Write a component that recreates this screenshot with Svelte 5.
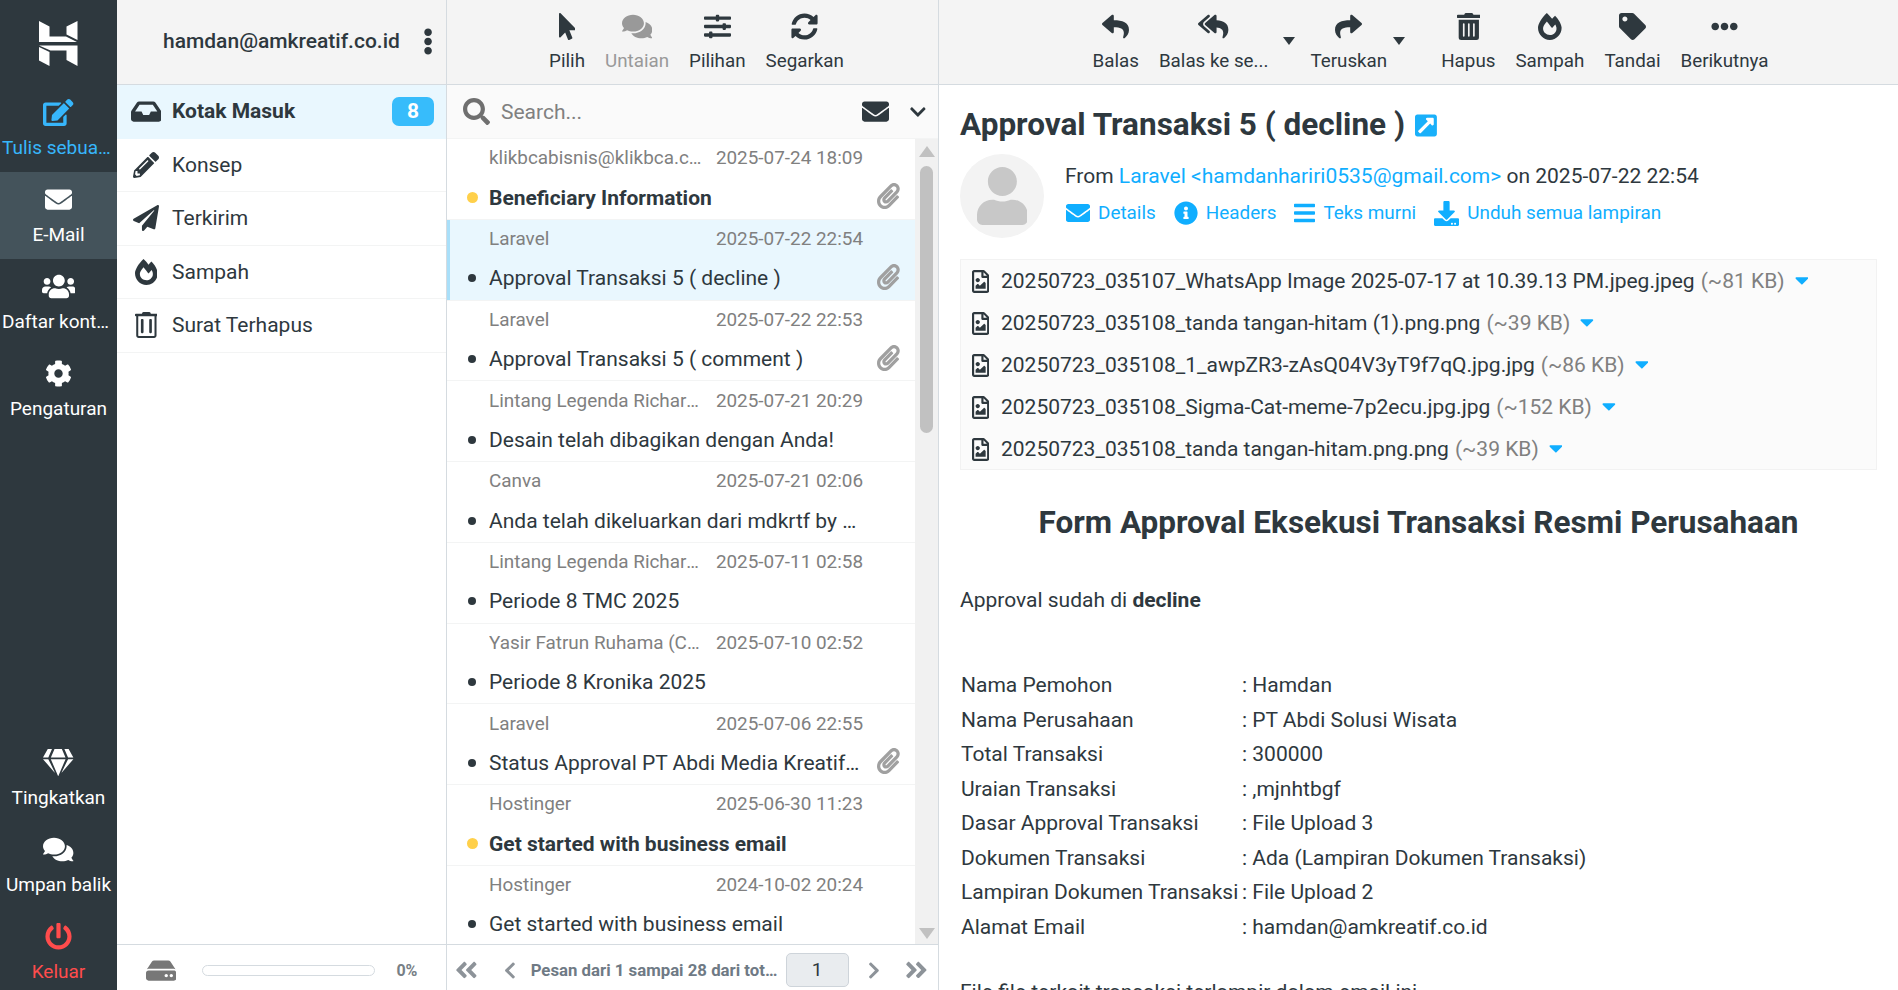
<script>
  const I = {
    edit: [576, "M402.6 83.2l90.2 90.2c3.8 3.8 3.8 10 0 13.8L274.4 405.6l-92.8 10.3c-12.4 1.4-22.9-9.1-21.5-21.5l10.3-92.8L388.8 83.2c3.8-3.8 10-3.8 13.8 0zm162-22.9l-48.8-48.8c-15.2-15.2-39.9-15.2-55.2 0l-35.4 35.4c-3.8 3.8-3.8 10 0 13.8l90.2 90.2c3.8 3.8 10 3.8 13.8 0l35.4-35.4c15.2-15.3 15.2-40 0-55.2zM384 346.2V448H64V128h229.8c3.2 0 6.2-1.3 8.5-3.5l40-40c7.6-7.6 2.2-20.5-8.5-20.5H48C21.5 64 0 85.5 0 112v352c0 26.5 21.5 48 48 48h352c26.5 0 48-21.5 48-48V306.2c0-10.7-12.9-16-20.5-8.5l-40 40c-2.2 2.3-3.5 5.3-3.5 8.5z"],
    envelope: [512, "M502.3 190.8c3.9-3.1 9.7-.2 9.7 4.7V400c0 26.5-21.5 48-48 48H48c-26.5 0-48-21.5-48-48V195.6c0-5 5.7-7.8 9.7-4.7 22.4 17.4 52.1 39.5 154.1 113.6 21.1 15.4 56.7 47.8 92.2 47.6 35.7.3 72-32.8 92.3-47.6 102-74.1 131.6-96.3 154-113.7zM256 320c23.2.4 56.6-29.2 73.4-41.4 132.7-96.3 142.8-104.7 173.4-128.7 5.8-4.5 9.2-11.5 9.2-18.9v-19c0-26.5-21.5-48-48-48H48C21.5 64 0 85.5 0 112v19c0 7.4 3.4 14.3 9.2 18.9 30.6 23.9 40.7 32.4 173.4 128.7 16.8 12.2 50.2 41.8 73.4 41.4z"],
    users: [640, "M96 224c35.3 0 64-28.7 64-64s-28.7-64-64-64-64 28.7-64 64 28.7 64 64 64zm448 0c35.3 0 64-28.7 64-64s-28.7-64-64-64-64 28.7-64 64 28.7 64 64 64zm32 32h-64c-17.6 0-33.5 7.1-45.1 18.6 40.3 22.1 68.9 62 75.1 109.4h66c17.7 0 32-14.3 32-32v-32c0-35.3-28.7-64-64-64zm-256 0c61.9 0 112-50.1 112-112S381.9 32 320 32 208 82.1 208 144s50.1 112 112 112zm76.8 32h-8.3c-20.8 10-43.9 16-68.5 16s-47.6-6-68.5-16h-8.3C179.6 288 128 339.6 128 403.2V432c0 26.5 21.5 48 48 48h288c26.5 0 48-21.5 48-48v-28.8c0-63.6-51.6-115.2-115.2-115.2zm-223.7-13.4C161.5 263.1 145.6 256 128 256H64c-35.3 0-64 28.7-64 64v32c0 17.7 14.3 32 32 32h65.9c6.3-47.4 34.9-87.3 75.2-109.4z"],
    cog: [512, "M487.4 315.7l-42.6-24.6c4.3-23.2 4.3-47 0-70.2l42.6-24.6c4.9-2.8 7.1-8.6 5.5-14-11.1-35.6-30-67.8-54.7-94.6-3.8-4.1-10-5.1-14.8-2.3L380.8 110c-17.9-15.4-38.5-27.3-60.8-35.1V25.8c0-5.6-3.9-10.5-9.4-11.7-36.7-8.2-74.3-7.8-109.2 0-5.5 1.2-9.4 6.1-9.4 11.7V75c-22.2 7.9-42.8 19.8-60.8 35.1L88.7 85.5c-4.9-2.8-11-1.9-14.8 2.3-24.7 26.7-43.6 58.9-54.7 94.6-1.7 5.4.6 11.2 5.5 14L67.3 221c-4.3 23.2-4.3 47 0 70.2l-42.6 24.6c-4.9 2.8-7.1 8.6-5.5 14 11.1 35.6 30 67.8 54.7 94.6 3.8 4.1 10 5.1 14.8 2.3l42.6-24.6c17.9 15.4 38.5 27.3 60.8 35.1v49.2c0 5.6 3.9 10.5 9.4 11.7 36.7 8.2 74.3 7.8 109.2 0 5.5-1.2 9.4-6.1 9.4-11.7v-49.2c22.2-7.9 42.8-19.8 60.8-35.1l42.6 24.6c4.9 2.8 11 1.9 14.8-2.3 24.7-26.7 43.6-58.9 54.7-94.6 1.5-5.5-.7-11.3-5.6-14.1zM256 336c-44.1 0-80-35.9-80-80s35.9-80 80-80 80 35.9 80 80-35.9 80-80 80z"],
    gem: [576, "M485.5 0L576 160H474.9L405.7 0h79.8zm-128 0l69.2 160H149.3L218.5 0h139zm-267 0h79.8l-69.2 160H0L90.5 0zM0 192h100.7l123 251.7c1.5 3.1-2.7 5.9-5 3.3L0 192zm148.2 0h279.6l-137 318.2c-1 2.4-4.5 2.4-5.5 0L148.2 192zm204.1 251.7l123-251.7H576L357.3 446.9c-2.3 2.7-6.5-.1-5-3.2z"],
    comments: [576, "M416 192c0-88.4-93.1-160-208-160S0 103.6 0 192c0 34.3 14.1 65.9 38 92-13.4 30.2-35.5 54.2-35.8 54.5-2.2 2.3-2.8 5.7-1.5 8.7S4.8 352 8 352c36.6 0 66.9-12.3 88.7-25 32.2 15.7 70.3 25 111.3 25 114.9 0 208-71.6 208-160zm122 220c23.9-26 38-57.7 38-92 0-66.9-53.5-124.2-129.3-148.1.9 6.6 1.3 13.3 1.3 20.1 0 105.9-107.7 192-240 192-10.8 0-21.3-.8-31.7-1.9C207.8 439.6 281.8 480 368 480c41 0 79.1-9.2 111.3-25 21.8 12.7 52.1 25 88.7 25 3.2 0 6.1-1.9 7.3-4.8 1.3-2.9.7-6.3-1.5-8.7-.3-.3-22.4-24.2-35.8-54.5z"],
    power: [512, "M400 54.1c63 45 104 118.6 104 201.9 0 136.8-110.8 247.7-247.5 248C120 504.3 8.2 393 8 256.4 7.9 173.1 48.9 99.3 111.8 54.2c11.7-8.3 28-4.8 35 7.7L162.6 90c5.9 10.5 3.1 23.8-6.6 31-41.5 30.8-68 79.6-68 134.9-.1 92.3 74.5 168.1 168 168.1 91.6 0 168.6-74.2 168-169.1-.3-51.8-24.7-101.8-68.1-134-9.7-7.2-12.4-20.5-6.5-30.9l15.8-28.1c7-12.4 23.2-16.1 34.8-7.8zM296 264V24c0-13.3-10.7-24-24-24h-32c-13.3 0-24 10.7-24 24v240c0 13.3 10.7 24 24 24h32c13.3 0 24-10.7 24-24z"],
    dots: [192, "M96 184c39.8 0 72 32.2 72 72s-32.2 72-72 72-72-32.2-72-72 32.2-72 72-72zM24 80c0 39.8 32.2 72 72 72s72-32.2 72-72S135.8 8 96 8 24 40.2 24 80zm0 352c0 39.8 32.2 72 72 72s72-32.2 72-72-32.2-72-72-72-72 32.2-72 72z"],
    inbox: [576, "M567.938 243.908L462.25 85.374A48.003 48.003 0 0 0 422.311 64H153.689a48 48 0 0 0-39.938 21.374L8.062 243.908A47.994 47.994 0 0 0 0 270.533V400c0 26.51 21.49 48 48 48h480c26.51 0 48-21.49 48-48V270.533a47.994 47.994 0 0 0-8.062-26.625zM162.252 128h251.497l85.333 128H376l-32 64H232l-32-64H76.918l85.334-128z"],
    pencil: [512, "M497.9 142.1l-46.1 46.1c-4.7 4.7-12.3 4.7-17 0l-111-111c-4.7-4.7-4.7-12.3 0-17l46.1-46.1c18.7-18.7 49.1-18.7 67.9 0l60.1 60.1c18.8 18.7 18.8 49.1 0 67.9zM284.2 99.8L21.6 362.4.4 483.9c-2.9 16.4 11.4 30.6 27.8 27.8l121.5-21.3 262.6-262.6c4.7-4.7 4.7-12.3 0-17l-111-111c-4.8-4.7-12.4-4.7-17.1 0zM124.1 339.9c-5.5-5.5-5.5-14.3 0-19.8l154-154c5.5-5.5 14.3-5.5 19.8 0s5.5 14.3 0 19.8l-154 154c-5.5 5.5-14.3 5.5-19.8 0zM88 424h48v36.3l-64.5 11.3-31.1-31.1L51.7 376H88v48z"],
    plane: [512, "M476 3.2L12.5 270.6c-18.1 10.4-15.8 35.6 2.2 43.2L121 358.4l287.3-253.2c5.5-4.9 13.3 2.6 8.6 8.3L176 407v80.5c0 23.6 28.5 32.9 42.5 15.8L282 426l124.6 52.2c14.2 6 30.4-2.9 33-18.2l72-432C515 7.8 493.3-6.8 476 3.2z"],
    fire: [448, "M323.56 51.2c-20.8 19.3-39.58 39.59-56.22 59.97C240.08 73.62 206.28 35.53 168 0 69.74 91.17 0 209.96 0 281.6 0 408.85 100.29 512 224 512s224-103.15 224-230.4c0-53.27-51.98-163.14-124.44-230.4zm-19.47 340.65C282.43 407.01 255.72 416 226.86 416 154.71 416 96 368.26 96 290.75c0-38.61 24.31-72.63 72.79-130.75 6.93 7.98 98.83 125.34 98.83 125.34l58.63-66.88c4.14 6.85 7.91 13.55 11.27 19.97 27.35 52.19 15.81 118.97-33.43 153.42z"],
    trashO: [448, "M136 32l10-20c4-8 12-12 21-12h114c9 0 17 4 21 12l10 20h120c9 0 16 7 16 16v22c0 9-7 16-16 16h-8v378c0 26-22 48-48 48H72c-26 0-48-22-48-48V86h-8c-9 0-16-7-16-16V48c0-9 7-16 16-16zM64 86v378c0 4 4 8 8 8h304c4 0 8-4 8-8V86zm68 54h20c9 0 16 7 16 16v244c0 9-7 16-16 16h-20c-9 0-16-7-16-16V156c0-9 7-16 16-16zm164 0h20c9 0 16 7 16 16v244c0 9-7 16-16 16h-20c-9 0-16-7-16-16V156c0-9 7-16 16-16z"],
    hdd: [576, "M576 304v96c0 26.51-21.49 48-48 48H48c-26.51 0-48-21.49-48-48v-96c0-26.51 21.49-48 48-48h480c26.51 0 48 21.49 48 48zm-48-80a79.557 79.557 0 0 1 30.777 6.165L462.25 85.374A48.003 48.003 0 0 0 422.311 64H153.689a48 48 0 0 0-39.938 21.374L17.223 230.165A79.557 79.557 0 0 1 48 224h480zm-48 96c-17.673 0-32 14.327-32 32s14.327 32 32 32 32-14.327 32-32-14.327-32-32-32zm-96 0c-17.673 0-32 14.327-32 32s14.327 32 32 32 32-14.327 32-32-14.327-32-32-32z"],
    pointer: [320, "M302.189 329.126H196.105l55.831 135.993c3.889 9.428-.555 19.999-9.444 23.999l-49.165 21.427c-9.165 4-19.443-.571-23.332-9.714l-53.053-129.136-86.664 89.138C18.729 472.71 0 463.554 0 447.977V18.299C0 1.899 19.921-6.096 30.277 5.443l284.412 292.542c11.472 11.179 3.007 31.141-12.5 31.141z"],
    sliders: [512, "M496 384H160v-16c0-8.8-7.2-16-16-16h-32c-8.8 0-16 7.2-16 16v16H16c-8.8 0-16 7.2-16 16v32c0 8.8 7.2 16 16 16h80v16c0 8.8 7.2 16 16 16h32c8.8 0 16-7.2 16-16v-16h336c8.8 0 16-7.2 16-16v-32c0-8.8-7.2-16-16-16zm0-160h-80v-16c0-8.8-7.2-16-16-16h-32c-8.8 0-16 7.2-16 16v16H16c-8.8 0-16 7.2-16 16v32c0 8.8 7.2 16 16 16h336v16c0 8.8 7.2 16 16 16h32c8.8 0 16-7.2 16-16v-16h80c8.8 0 16-7.2 16-16v-32c0-8.8-7.2-16-16-16zm0-160H288V48c0-8.8-7.2-16-16-16h-32c-8.8 0-16 7.2-16 16v16H16C7.2 64 0 71.2 0 80v32c0 8.8 7.2 16 16 16h208v16c0 8.8 7.2 16 16 16h32c8.8 0 16-7.2 16-16v-16h208c8.8 0 16-7.2 16-16V80c0-8.8-7.2-16-16-16z"],
    sync: [512, "M370.72 133.28C339.458 104.008 298.888 87.962 255.848 88c-77.458.068-144.328 53.178-162.791 126.85-1.344 5.363-6.122 9.15-11.651 9.15H24.103c-7.498 0-13.194-6.807-11.807-14.176C33.933 94.924 134.813 8 256 8c66.448 0 126.791 26.136 171.315 68.685L463.03 40.97C478.149 25.851 504 36.559 504 57.941V192c0 13.255-10.745 24-24 24H345.941c-21.382 0-32.09-25.851-16.971-40.971l41.75-41.749zM32 296h134.059c21.382 0 32.09 25.851 16.971 40.971l-41.75 41.75c31.262 29.273 71.835 45.319 114.876 45.28 77.418-.07 144.315-53.144 162.787-126.849 1.344-5.363 6.122-9.15 11.651-9.15h57.304c7.498 0 13.194 6.807 11.807 14.176C478.067 417.076 377.187 504 256 504c-66.448 0-126.791-26.136-171.315-68.685L48.97 471.03C33.851 486.149 8 475.441 8 454.059V320c0-13.255 10.745-24 24-24z"],
    search: [512, "M505 442.7L405.3 343c-4.5-4.5-10.6-7-17-7H372c27.6-35.3 44-79.7 44-128C416 93.1 322.9 0 208 0S0 93.1 0 208s93.1 208 208 208c48.3 0 92.7-16.4 128-44v16.3c0 6.4 2.5 12.5 7 17l99.7 99.7c9.4 9.4 24.6 9.4 33.9 0l28.3-28.3c9.4-9.4 9.4-24.6.1-34zM208 336c-70.7 0-128-57.2-128-128 0-70.7 57.2-128 128-128 70.7 0 128 57.2 128 128 0 70.7-57.2 128-128 128z"],
    chevDown: [448, "M207.029 381.476L12.686 187.132c-9.373-9.373-9.373-24.569 0-33.941l22.667-22.667c9.357-9.357 24.522-9.375 33.901-.04L224 284.505l154.745-154.021c9.379-9.335 24.544-9.317 33.901.04l22.667 22.667c9.373 9.373 9.373 24.569 0 33.941L240.971 381.476c-9.373 9.372-24.569 9.372-33.942 0z"],
    chevLeft: [320, "M34.52 239.03L228.87 44.69c9.37-9.37 24.57-9.37 33.94 0l22.67 22.67c9.36 9.36 9.37 24.52.04 33.9L131.49 256l154.02 154.75c9.34 9.38 9.32 24.54-.04 33.9l-22.67 22.67c-9.37 9.37-24.57 9.37-33.94 0L34.52 272.97c-9.37-9.37-9.37-24.57 0-33.94z"],
    chevRight: [320, "M285.476 272.971L91.132 467.314c-9.373 9.373-24.569 9.373-33.941 0l-22.667-22.667c-9.357-9.357-9.375-24.522-.04-33.901L188.505 256 34.484 101.255c-9.335-9.379-9.317-24.544.04-33.901l22.667-22.667c9.373-9.373 24.569-9.373 33.941 0L285.475 239.03c9.373 9.372 9.373 24.568.001 33.941z"],
    dblLeft: [448, "M223.7 239l136-136c9.4-9.4 24.6-9.4 33.9 0l22.6 22.6c9.4 9.4 9.4 24.6 0 33.9L319.9 256l96.4 96.4c9.4 9.4 9.4 24.6 0 33.9L393.7 409c-9.4 9.4-24.6 9.4-33.9 0l-136-136c-9.5-9.4-9.5-24.6-.1-34zm-192 34l136 136c9.4 9.4 24.6 9.4 33.9 0l22.6-22.6c9.4-9.4 9.4-24.6 0-33.9L127.9 256l96.4-96.4c9.4-9.4 9.4-24.6 0-33.9L201.7 103c-9.4-9.4-24.6-9.4-33.9 0l-136 136c-9.5 9.4-9.5 24.6-.1 34z"],
    dblRight: [448, "M224.3 273l-136 136c-9.4 9.4-24.6 9.4-33.9 0l-22.6-22.6c-9.4-9.4-9.4-24.6 0-33.9l96.4-96.4-96.4-96.4c-9.4-9.4-9.4-24.6 0-33.9L54.3 103c9.4-9.4 24.6-9.4 33.9 0l136 136c9.5 9.4 9.5 24.6.1 34zm192-34l-136-136c-9.4-9.4-24.6-9.4-33.9 0l-22.6 22.6c-9.4 9.4-9.4 24.6 0 33.9l96.4 96.4-96.4 96.4c-9.4 9.4-9.4 24.6 0 33.9l22.6 22.6c9.4 9.4 24.6 9.4 33.9 0l136-136c9.4-9.2 9.4-24.4 0-33.8z"],
    clip: [448, "M43.246 466.142c-58.43-60.289-57.341-157.511 1.386-217.581L254.392 34c44.316-45.332 116.351-45.336 160.671 0 43.89 44.894 43.943 117.329 0 162.276L232.214 383.128c-29.855 30.537-78.633 30.111-107.982-.998-28.275-29.97-27.368-77.473 1.452-106.953l143.743-146.835c6.182-6.314 16.312-6.422 22.626-.241l22.861 22.379c6.315 6.182 6.422 16.312.241 22.626L171.427 319.927c-4.932 5.045-5.236 13.428-.648 18.292 4.372 4.634 11.245 4.711 15.688.165l182.849-186.851c19.613-20.062 19.613-52.725-.011-72.798-19.189-19.627-49.957-19.637-69.154 0L90.39 293.295c-34.763 35.56-35.299 93.12-1.191 128.313 34.01 35.093 88.985 35.137 123.058.286l172.06-175.999c6.177-6.319 16.307-6.433 22.626-.256l22.877 22.364c6.319 6.177 6.434 16.307.256 22.626l-172.06 175.998c-59.576 60.938-155.943 60.216-214.77-.485z"],
    reply: [512, "M8.309 189.836L184.313 37.851C199.719 24.546 224 35.347 224 56.015v80.053c160.629 1.839 288 34.032 288 186.258 0 61.441-39.581 122.309-83.333 154.132-13.653 9.931-33.111-2.533-28.077-18.631 45.344-145.012-21.507-183.51-176.59-185.742V360c0 20.7-24.3 31.453-39.687 18.164l-176.004-152c-11.071-9.562-11.086-26.753 0-36.328z"],
    replyAll: [576, "M136.309 189.836L312.313 37.851C327.72 24.546 352 35.348 352 56.015v82.763c129.182 10.231 224 52.212 224 183.548 0 61.441-39.582 122.309-83.333 154.132-13.653 9.931-33.111-2.533-28.077-18.631 38.512-123.162-3.922-169.482-112.59-182.015v84.175c0 20.701-24.3 31.453-39.687 18.164L136.309 226.164c-11.071-9.561-11.086-26.753 0-36.328zm-128 36.328L184.313 378.15C199.7 391.439 224 380.687 224 359.986v-15.818l-108.606-93.785A55.96 55.96 0 0 1 96 207.998a55.953 55.953 0 0 1 19.393-42.38L224 71.832V56.015c0-20.667-24.28-31.469-39.687-18.164L8.309 189.836c-11.086 9.575-11.071 26.767 0 36.328z"],
    share: [512, "M503.691 189.836L327.687 37.851C312.281 24.546 288 35.347 288 56.015v80.053C127.371 137.907 0 170.1 0 322.326c0 61.441 39.581 122.309 83.333 154.132 13.653 9.931 33.111-2.533 28.077-18.631C66.066 312.814 132.917 274.316 288 272.085V360c0 20.7 24.3 31.453 39.687 18.164l176.004-152c11.071-9.562 11.086-26.753 0-36.328z"],
    trash: [448, "M32 464a48 48 0 0 0 48 48h288a48 48 0 0 0 48-48V128H32zm272-256a16 16 0 0 1 32 0v224a16 16 0 0 1-32 0zm-96 0a16 16 0 0 1 32 0v224a16 16 0 0 1-32 0zm-96 0a16 16 0 0 1 32 0v224a16 16 0 0 1-32 0zM432 32H312l-9.4-18.7A24 24 0 0 0 281.1 0H166.8a23.72 23.72 0 0 0-21.4 13.3L136 32H16A16 16 0 0 0 0 48v32a16 16 0 0 0 16 16h416a16 16 0 0 0 16-16V48a16 16 0 0 0-16-16z"],
    tag: [512, "M0 252.118V48C0 21.49 21.49 0 48 0h204.118a48 48 0 0 1 33.941 14.059l211.882 211.882c18.745 18.745 18.745 49.137 0 67.882L293.823 497.941c-18.745 18.745-49.137 18.745-67.882 0L14.059 286.059A48 48 0 0 1 0 252.118zM112 64c-26.51 0-48 21.49-48 48s21.49 48 48 48 48-21.49 48-48-21.49-48-48-48z"],
    ellipsis: [512, "M328 256c0 39.8-32.2 72-72 72s-72-32.2-72-72 32.2-72 72-72 72 32.2 72 72zm104-72c-39.8 0-72 32.2-72 72s32.2 72 72 72 72-32.2 72-72-32.2-72-72-72zm-352 0c-39.8 0-72 32.2-72 72s32.2 72 72 72 72-32.2 72-72-32.2-72-72-72z"],
    ext: [448, "M448 80v352c0 26.51-21.49 48-48 48H48c-26.51 0-48-21.49-48-48V80c0-26.51 21.49-48 48-48h352c26.51 0 48 21.49 48 48zm-88 16H248.029c-21.313 0-32.08 25.861-16.971 40.971l31.984 31.987L67.515 364.485c-4.686 4.686-4.686 12.284 0 16.971l31.029 31.029c4.687 4.686 12.285 4.686 16.971 0l195.526-195.526 31.988 31.991C358.058 263.977 384 253.425 384 231.979V120c0-13.255-10.745-24-24-24z"],
    info: [512, "M256 8C119.043 8 8 119.083 8 256c0 136.997 111.043 248 248 248s248-111.003 248-248C504 119.083 392.957 8 256 8zm0 110c23.196 0 42 18.804 42 42s-18.804 42-42 42-42-18.804-42-42 18.804-42 42-42zm56 254c0 6.627-5.373 12-12 12h-88c-6.627 0-12-5.373-12-12v-24c0-6.627 5.373-12 12-12h12v-64h-12c-6.627 0-12-5.373-12-12v-24c0-6.627 5.373-12 12-12h64c6.627 0 12 5.373 12 12v100h12c6.627 0 12 5.373 12 12v24z"],
    bars: [448, "M16 132h416c8.837 0 16-7.163 16-16V76c0-8.837-7.163-16-16-16H16C7.163 60 0 67.163 0 76v40c0 8.837 7.163 16 16 16zm0 160h416c8.837 0 16-7.163 16-16v-40c0-8.837-7.163-16-16-16H16c-8.837 0-16 7.163-16 16v40c0 8.837 7.163 16 16 16zm0 160h416c8.837 0 16-7.163 16-16v-40c0-8.837-7.163-16-16-16H16c-8.837 0-16 7.163-16 16v40c0 8.837 7.163 16 16 16z"],
    download: [512, "M216 0h80c13.3 0 24 10.7 24 24v168h87.7c17.8 0 26.7 21.5 14.1 34.1L269.7 378.3c-7.5 7.5-19.8 7.5-27.3 0L90.1 226.1c-12.6-12.6-3.7-34.1 14.1-34.1H192V24c0-13.3 10.7-24 24-24zm296 376v112c0 13.3-10.7 24-24 24H24c-13.3 0-24-10.7-24-24V376c0-13.3 10.7-24 24-24h146.7l49 49c20.1 20.1 52.5 20.1 72.6 0l49-49H488c13.3 0 24 10.7 24 24zm-124 88c0-11-9-20-20-20s-20 9-20 20 9 20 20 20 20-9 20-20zm64 0c0-11-9-20-20-20s-20 9-20 20 9 20 20 20 20-9 20-20z"],
    fileImg: [384, "M369.9 97.9L286 14C277 5 264.8-.1 252.1-.1H48C21.5 0 0 21.5 0 48v416c0 26.5 21.5 48 48 48h288c26.5 0 48-21.5 48-48V131.9c0-12.7-5.1-25-14.1-34zM332.1 128H256V51.9l76.1 76.1zM48 464V48h160v104c0 13.3 10.7 24 24 24h104v288H48zm32-48h224V288l-23.5-23.5c-4.7-4.7-12.3-4.7-17 0L176 352l-39.5-39.5c-4.7-4.7-12.3-4.7-17 0L80 352v64zm48-240c-26.5 0-48 21.5-48 48s21.5 48 48 48 48-21.5 48-48-21.5-48-48-48z"],
    caret: [320, "M31.3 192h257.3c17.8 0 26.7 21.5 14.1 34.1L174.1 354.8c-7.8 7.8-20.5 7.8-28.3 0L17.2 226.1C4.6 213.5 13.5 192 31.3 192z"],
    user: [448, "M224 256c70.7 0 128-57.3 128-128S294.7 0 224 0 96 57.3 96 128s57.3 128 128 128zm89.6 32h-16.7c-22.2 10.2-46.9 16-72.9 16s-50.6-5.8-72.9-16h-16.7C60.2 288 0 348.2 0 422.4V464c0 26.5 21.5 48 48 48h352c26.5 0 48-21.5 48-48v-41.6c0-74.2-60.2-134.4-134.4-134.4z"]
  };

  const navTop = [
    { icon: "edit", label: "Tulis sebuah pesan", cls: "blue" },
    { icon: "envelope", label: "E-Mail", cls: "active" },
    { icon: "users", label: "Daftar kontak", cls: "" },
    { icon: "cog", label: "Pengaturan", cls: "" }
  ];
  const navBottom = [
    { icon: "gem", label: "Tingkatkan", cls: "" },
    { icon: "comments", label: "Umpan balik", cls: "" },
    { icon: "power", label: "Keluar", cls: "red" }
  ];
  const folders = [
    { icon: "inbox", label: "Kotak Masuk", active: true, badge: 8 },
    { icon: "pencil", label: "Konsep" },
    { icon: "plane", label: "Terkirim" },
    { icon: "fire", label: "Sampah" },
    { icon: "trashO", label: "Surat Terhapus" }
  ];
  const messages = [
    { from: "klikbcabisnis@klikbca.co.id", date: "2025-07-24 18:09", subject: "Beneficiary Information", unread: true, clip: true },
    { from: "Laravel", date: "2025-07-22 22:54", subject: "Approval Transaksi 5 ( decline )", selected: true, clip: true },
    { from: "Laravel", date: "2025-07-22 22:53", subject: "Approval Transaksi 5 ( comment )", clip: true },
    { from: "Lintang Legenda Richardo", date: "2025-07-21 20:29", subject: "Desain telah dibagikan dengan Anda!" },
    { from: "Canva", date: "2025-07-21 02:06", subject: "Anda telah dikeluarkan dari mdkrtf by Canva" },
    { from: "Lintang Legenda Richardo", date: "2025-07-11 02:58", subject: "Periode 8 TMC 2025" },
    { from: "Yasir Fatrun Ruhama (CEO)", date: "2025-07-10 02:52", subject: "Periode 8 Kronika 2025" },
    { from: "Laravel", date: "2025-07-06 22:55", subject: "Status Approval PT Abdi Media Kreatif Indonesia", clip: true },
    { from: "Hostinger", date: "2025-06-30 11:23", subject: "Get started with business email", unread: true },
    { from: "Hostinger", date: "2024-10-02 20:24", subject: "Get started with business email" }
  ];
  const attachments = [
    ["20250723_035107_WhatsApp Image 2025-07-17 at 10.39.13 PM.jpeg.jpeg", "(~81 KB)"],
    ["20250723_035108_tanda tangan-hitam (1).png.png", "(~39 KB)"],
    ["20250723_035108_1_awpZR3-zAsQ04V3yT9f7qQ.jpg.jpg", "(~86 KB)"],
    ["20250723_035108_Sigma-Cat-meme-7p2ecu.jpg.jpg", "(~152 KB)"],
    ["20250723_035108_tanda tangan-hitam.png.png", "(~39 KB)"]
  ];
  const details = [
    ["Nama Pemohon", "Hamdan"],
    ["Nama Perusahaan", "PT Abdi Solusi Wisata"],
    ["Total Transaksi", "300000"],
    ["Uraian Transaksi", ",mjnhtbgf"],
    ["Dasar Approval Transaksi", "File Upload 3"],
    ["Dokumen Transaksi", "Ada (Lampiran Dokumen Transaksi)"],
    ["Lampiran Dokumen Transaksi", "File Upload 2"],
    ["Alamat Email", "hamdan@amkreatif.co.id"]
  ];
</script>

{#snippet ic(name, size)}
  <svg class="ic" viewBox="0 0 {I[name][0]} 512" height={size} width={(size * I[name][0]) / 512} fill="currentColor" aria-hidden="true"><path d={I[name][1]} /></svg>
{/snippet}

{#snippet navItem(n)}
  <div class="nav-item {n.cls}">
    {@render ic(n.icon, 27)}
    <span class="nav-label">{n.label}</span>
  </div>
{/snippet}

{#snippet tool(icon, label, cls = "")}
  <div class="tool {cls}">
    {@render ic(icon, 27)}
    <span>{label}</span>
  </div>
{/snippet}

<div class="app">
  <nav class="sidebar">
    <div class="logo">
      <svg viewBox="0 0 60 58" width="60" height="58" fill="#fff" aria-hidden="true">
        <polygon points="9,6 19.5,11.5 19.5,21.5 36,21.5 47,27 9,27" />
        <polygon points="36.5,11.5 47.5,6 47.5,25 36.5,19.5" />
        <polygon points="9,30.5 47.5,30.5 47.5,51 36.5,45 36.5,35.5 20.5,35.5" />
        <polygon points="9,32 19.5,37 19.5,51 9,45.5" />
      </svg>
    </div>
    {#each navTop as n}{@render navItem(n)}{/each}
    <div class="nav-spacer"></div>
    {#each navBottom as n}{@render navItem(n)}{/each}
  </nav>

  <section class="folders">
    <header class="account">
      <span class="email">hamdan@amkreatif.co.id</span>
      {@render ic("dots", 27)}
    </header>
    <ul class="folder-list">
      {#each folders as f}
        <li class="folder" class:active={f.active}>
          <span class="folder-icon">{@render ic(f.icon, f.active ? 27 : 26)}</span>
          <span class="folder-name">{f.label}</span>
          {#if f.badge}<span class="badge">{f.badge}</span>{/if}
        </li>
      {/each}
    </ul>
    <footer class="quota">
      <span class="quota-icon">{@render ic("hdd", 27)}</span>
      <span class="meter"></span>
      <span class="pct">0%</span>
    </footer>
  </section>

  <section class="list">
    <header class="toolbar list-tools">
      {@render tool("pointer", "Pilih")}
      {@render tool("comments", "Untaian", "off")}
      {@render tool("sliders", "Pilihan")}
      {@render tool("sync", "Segarkan")}
    </header>
    <div class="search">
      <span class="search-icon">{@render ic("search", 27)}</span>
      <span class="placeholder">Search...</span>
      <span class="search-mail">{@render ic("envelope", 27)}</span>
      <span class="search-chev">{@render ic("chevDown", 18)}</span>
    </div>
    <div class="messages">
      <div class="rows">
        {#each messages as m}
          <article class="row" class:selected={m.selected}>
            <div class="meta">
              <span class="from">{m.from}</span>
              <span class="date">{m.date}</span>
            </div>
            <div class="subject-line">
              <span class="bullet" class:unread={m.unread}></span>
              <span class="subject" class:bold={m.unread}>{m.subject}</span>
              {#if m.clip}<span class="clip">{@render ic("clip", 26)}</span>{/if}
            </div>
          </article>
        {/each}
      </div>
      <div class="scroll">
        <svg class="arrow" viewBox="0 0 16 11" width="16" height="11" aria-hidden="true"><polygon points="8,0 16,11 0,11" /></svg>
        <div class="track"><div class="thumb"></div></div>
        <svg class="arrow" viewBox="0 0 16 11" width="16" height="11" aria-hidden="true"><polygon points="0,0 16,0 8,11" /></svg>
      </div>
    </div>
    <footer class="pager">
      <span class="pg p1">{@render ic("dblLeft", 26)}</span>
      <span class="pg p2">{@render ic("chevLeft", 19)}</span>
      <span class="pager-text">Pesan dari 1 sampai 28 dari total 28</span>
      <span class="page-box">1</span>
      <span class="pg p3">{@render ic("chevRight", 19)}</span>
      <span class="pg p4">{@render ic("dblRight", 26)}</span>
    </footer>
  </section>

  <section class="reader">
    <header class="toolbar read-tools">
      {@render tool("reply", "Balas")}
      <div class="split s1">
        {@render tool("replyAll", "Balas ke se...")}
        <svg class="drop" viewBox="0 0 12 8" width="12" height="8" aria-hidden="true"><polygon points="0,0 12,0 6,8" /></svg>
      </div>
      <div class="split s2">
        {@render tool("share", "Teruskan")}
        <svg class="drop" viewBox="0 0 12 8" width="12" height="8" aria-hidden="true"><polygon points="0,0 12,0 6,8" /></svg>
      </div>
      {@render tool("trash", "Hapus")}
      {@render tool("fire", "Sampah")}
      {@render tool("tag", "Tandai")}
      {@render tool("ellipsis", "Berikutnya")}
    </header>
    <div class="content">
      <h2 class="title"><span>Approval Transaksi 5 ( decline )</span><span class="ext">{@render ic("ext", 25)}</span></h2>
      <div class="sender">
        <div class="avatar">{@render ic("user", 58)}</div>
        <div class="sender-info">
          <p class="from-line">From <a href="#top">Laravel &lt;hamdanhariri0535@gmail.com&gt;</a> on 2025-07-22 22:54</p>
          <div class="links">
            <span class="lnk">{@render ic("envelope", 24)}Details</span>
            <span class="lnk">{@render ic("info", 24)}Headers</span>
            <span class="lnk">{@render ic("bars", 24)}Teks murni</span>
            <span class="lnk">{@render ic("download", 25)}Unduh semua lampiran</span>
          </div>
        </div>
      </div>
      <div class="attachments">
        {#each attachments as a}
          <div class="att">
            <span class="att-icon">{@render ic("fileImg", 23)}</span>
            <span>{a[0]}</span>
            <span class="size">{a[1]}</span>
            <span class="att-caret">{@render ic("caret", 22)}</span>
          </div>
        {/each}
      </div>
      <h1 class="form-title">Form Approval Eksekusi Transaksi Resmi Perusahaan</h1>
      <p class="status">Approval sudah di <b>decline</b></p>
      <table class="data">
        <tbody>
          {#each details as d}
            <tr><td class="k">{d[0]}</td><td>: {d[1]}</td></tr>
          {/each}
        </tbody>
      </table>
      <p class="files">File file terkait transaksi terlampir dalam email ini</p>
    </div>
  </section>
</div>

<style>
  :global(html), :global(body) { margin: 0; height: 100%; overflow: hidden; }
  :global(body) { font-family: Roboto, "Liberation Sans", sans-serif; color: #2e383e; font-size: 21px; background: #fff; }
  * { box-sizing: border-box; }
  .ic { display: block; flex: none; }
  .app { display: grid; grid-template-columns: 117px 330px 492px 959px; height: 990px; overflow: hidden; }

  .sidebar { background: #2e383e; color: #fff; display: flex; flex-direction: column; height: 996px; }
  .logo { height: 85px; padding: 15px 0 0 30px; }
  .nav-item { height: 87px; display: flex; flex-direction: column; align-items: center; padding-top: 14px; gap: 9px; }
  .nav-item.active { background: #44535b; }
  .nav-item.blue { color: #37b6fb; }
  .nav-item.red { color: #ff4c4c; }
  .nav-label { font-size: 19px; line-height: 26px; width: 113px; text-align: center; white-space: nowrap; overflow: hidden; text-overflow: ellipsis; }
  .nav-spacer { flex: 1; }

  .folders { border-right: 1px solid #d5dbe0; display: flex; flex-direction: column; height: 990px; }
  .account { height: 85px; background: #f4f4f4; border-bottom: 1px solid #d5dbe0; display: flex; align-items: center; justify-content: space-between; padding: 0 13px 2px 46px; }
  .email { font-weight: 500; }
  .folder-list { list-style: none; margin: 0; padding: 0; flex: 1; }
  .folder { height: 53.5px; display: flex; align-items: center; border-bottom: 1px solid #f3f4f4; padding: 0 12px 0 14px; }
  .folder.active { background: #e9f7fe; font-weight: 700; border-bottom-color: #e9f7fe; }
  .folder-icon { width: 30px; margin-right: 11px; display: flex; justify-content: center; }
  .folder-name { flex: 1; }
  .badge { width: 42px; height: 29px; border-radius: 7px; background: #37bcfb; color: #fff; font-weight: 700; text-align: center; line-height: 29px; }
  .quota { height: 46px; border-top: 1px solid #d5dbe0; display: flex; align-items: center; padding: 5px 0 0 29px; color: #777; }
  .quota-icon { margin-right: 26px; }
  .meter { width: 173px; height: 11px; border: 1px solid #d5dbe0; border-radius: 6px; margin-right: 21px; }
  .pct { font-size: 16px; font-weight: 700; color: #777f86; }

  .list { border-right: 1px solid #d5dbe0; display: flex; flex-direction: column; height: 990px; min-width: 0; }
  .toolbar { height: 85px; flex: none; background: #f4f4f4; border-bottom: 1px solid #d5dbe0; display: flex; justify-content: center; }
  .list-tools { padding-left: 8px; }
  .tool { padding: 13px 10px 0; display: flex; flex-direction: column; align-items: center; gap: 8px; font-size: 18.8px; line-height: 26px; white-space: nowrap; }
  .tool.off { color: #999; }
  .search { height: 54px; flex: none; background: #fafafa; border-bottom: 1px solid #f3f4f4; display: flex; align-items: center; padding: 0 12px 0 16px; }
  .search-icon { color: #6f6f6f; margin-right: 11px; }
  .placeholder { flex: 1; color: #808080; }
  .search-chev { margin-left: 21px; }
  .messages { flex: 1; min-height: 0; display: flex; overflow: hidden; }
  .rows { width: 468px; flex: none; overflow: hidden; }
  .row { height: 80.75px; border-bottom: 1px solid #f3f4f4; padding: 0 8px 0 0; }
  .row.selected { background: #e9f7fe; box-shadow: inset 3px 0 0 #a9dff9; }
  .meta { height: 37.5px; display: flex; justify-content: space-between; align-items: center; padding: 0 44px 0 42px; color: #808080; font-size: 18.9px; }
  .from { width: 214px; white-space: nowrap; overflow: hidden; text-overflow: ellipsis; }
  .subject-line { height: 42px; display: flex; align-items: center; }
  .bullet { width: 8px; height: 8px; border-radius: 50%; background: #2e383e; margin: 0 13px 0 21px; flex: none; }
  .bullet.unread { width: 11px; height: 11px; background: #ffd04a; margin: 0 11px 0 20px; }
  .subject { flex: 1; min-width: 0; max-width: 373px; white-space: nowrap; overflow: hidden; text-overflow: ellipsis; }
  .subject.bold { font-weight: 700; }
  .clip { color: #a0a0a0; margin-left: auto; width: 30px; flex: none; margin-top: -3px; }
  .scroll { flex: 1; background: #f1f1f1; display: flex; flex-direction: column; align-items: center; padding: 7px 0 5px; fill: #c1c1c1; }
  .track { flex: 1; width: 100%; padding: 9px 5px 0; }
  .thumb { height: 267px; background: #c1c1c1; border-radius: 7px; }
  .pager { height: 46px; flex: none; border-top: 1px solid #d5dbe0; display: flex; align-items: center; padding-top: 5px; color: #8d9399; }
  .pg { display: block; }
  .p1 { margin: 0 26px 0 8px; }
  .p2 { margin-right: 15px; }
  .pager-text { width: 248px; font-weight: 700; font-size: 16.8px; color: #6f7a85; white-space: nowrap; overflow: hidden; text-overflow: ellipsis; }
  .page-box { width: 63px; height: 34px; margin-left: 7px; background: #e9ecef; border: 1px solid #ced4da; border-radius: 5px; color: #2e383e; text-align: center; line-height: 32px; font-size: 19px; }
  .p3 { margin: 0 25px 0 19px; }

  .reader { min-width: 0; height: 990px; overflow: hidden; }
  .read-tools { padding-left: 24px; }
  .split { position: relative; }
  .s1 { margin-right: 22px; }
  .s2 { margin-right: 34px; }
  .drop { position: absolute; top: 37px; fill: #2e383e; }
  .s1 .drop { left: calc(100% + 5px); }
  .s2 .drop { left: calc(100% - 4px); }
  .content { padding: 0 21px; }
  .title { margin: 16px 0 0; font-size: 31.5px; font-weight: 700; line-height: 48px; display: flex; align-items: center; gap: 10px; }
  .ext { color: #19b0fa; }
  .sender { display: flex; margin-top: 5px; }
  .avatar { width: 84px; height: 84px; border-radius: 50%; background: #f3f3f3; color: #c8c8c8; display: flex; align-items: center; justify-content: center; }
  .sender-info { margin-left: 21px; }
  .from-line { margin: 10px 0 0; line-height: 24px; }
  a { color: #10aeff; text-decoration: none; }
  .links { display: flex; margin: 12px 0 0 1px; gap: 18px; color: #10aeff; font-size: 18.9px; }
  .lnk { display: flex; align-items: center; gap: 8px; line-height: 26px; }
  .attachments { margin-top: 21px; height: 211px; border: 1px solid #f2f2f2; background: #fbfbfb; padding: 0 11px; }
  .att { height: 42px; display: flex; align-items: center; white-space: pre; }
  .att-icon { width: 29px; }
  .size { color: #808080; margin-left: 6px; }
  .att-caret { color: #10aeff; margin-left: 10px; margin-top: -2px; }
  .form-title { margin: 28px 0 0; text-align: center; font-size: 31.5px; font-weight: 700; line-height: 50px; }
  .status { margin: 38px 0 0; line-height: 28px; }
  .status b { font-weight: 700; }
  .data { border-collapse: collapse; margin-top: 54px; }
  .data td { padding: 0 0 0 1px; height: 34.5px; line-height: 28px; white-space: nowrap; }
  .k { width: 281px; }
  .files { margin: 34px 0 0; line-height: 28px; white-space: nowrap; }
</style>
